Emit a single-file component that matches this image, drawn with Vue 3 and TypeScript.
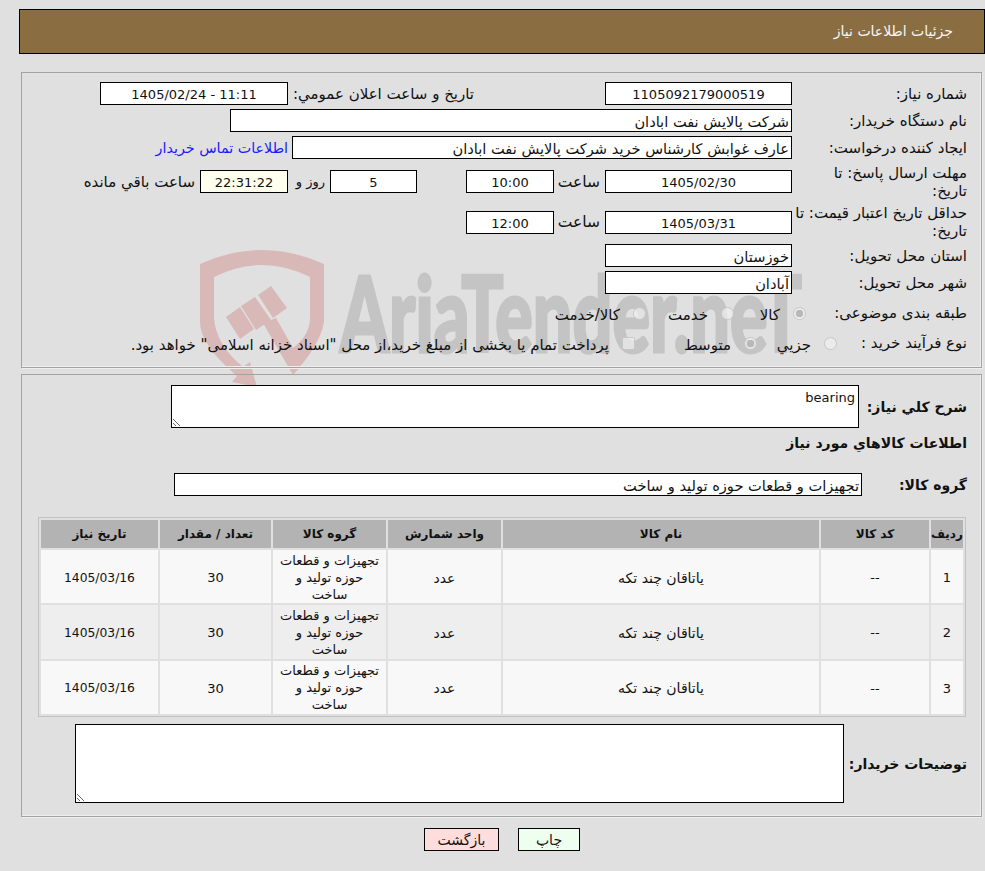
<script setup lang="ts">
interface Item {
  id: number
  code: string
  name: string
  unit: string
  group: string
  qty: number
  date: string
}

const items: Item[] = [1, 2, 3].map((id) => ({
  id,
  code: '--',
  name: 'یاتاقان چند تکه',
  unit: 'عدد',
  group: 'تجهیزات و قطعات حوزه تولید و ساخت',
  qty: 30,
  date: '1405/03/16',
}))
</script>

<template>
  <div class="page" dir="rtl">
    <!-- watermark -->
    <svg class="watermark" width="985" height="871" viewBox="0 0 985 871">
      <g fill="#d9b8b8">
        <path d="M200 264 Q262 236 324 264 L324 322 Q320 345 293 375 L293 348 Q310 335 310 318 L310 277 Q262 253 214 277 L214 318 Q216 345 243 367 L250 362 L257 387 L232 382 L237 376 Q200 345 200 322 Z" />
        <path d="M226 317 L240 307 L254 329 L240 339 Z" />
        <path d="M241 306 L255 297 L271 320 L256 330 Z" />
        <path d="M258 295 L271 286 L287 308 L273 318 Z" />
        <path d="M263 323 L276 318 L293 348 L293 375 Z" />
      </g>
      <text class="wm-text" x="340" y="352" textLength="462" lengthAdjust="spacingAndGlyphs">AriaTender.neT</text>
    </svg>

    <div class="content">
      <header class="title-bar">جزئیات اطلاعات نیاز</header>

      <section class="panel panel-top">
        <div class="row">
          <span class="label">شماره نیاز:</span>
          <div class="field w-187 center">1105092179000519</div>
          <span class="label-announce">تاريخ و ساعت اعلان عمومي:</span>
          <div class="field w-188 center">11:11 - 1405/02/24</div>
        </div>
        <div class="row">
          <span class="label">نام دستگاه خریدار:</span>
          <div class="field fa w-562">شرکت پالایش نفت ابادان</div>
        </div>
        <div class="row">
          <span class="label">ایجاد کننده درخواست:</span>
          <div class="field fa w-500">عارف غوابش کارشناس خرید شرکت پالایش نفت ابادان</div>
          <a class="contact" href="#">اطلاعات تماس خریدار</a>
        </div>
        <div class="row row-tall">
          <span class="label">مهلت ارسال پاسخ: تا<br />تاریخ:</span>
          <div class="field w-187 center">1405/02/30</div>
          <span class="hour">ساعت</span>
          <div class="field w-88 center">10:00</div>
          <div class="field w-87 center days">5</div>
          <span class="day-label">روز و</span>
          <div class="field w-88 center timer">22:31:22</div>
          <span class="remain">ساعت باقي مانده</span>
        </div>
        <div class="row row-tall">
          <span class="label">حداقل تاریخ اعتبار قیمت: تا<br />تاریخ:</span>
          <div class="field w-187 center">1405/03/31</div>
          <span class="hour">ساعت</span>
          <div class="field w-88 center">12:00</div>
        </div>
        <div class="row">
          <span class="label">استان محل تحویل:</span>
          <div class="field fa w-187">خوزستان</div>
        </div>
        <div class="row">
          <span class="label">شهر محل تحویل:</span>
          <div class="field fa w-187">آبادان</div>
        </div>
        <div class="row row-category">
          <span class="opt-label cat-label">طبقه بندی موضوعی:</span>
          <label class="option cat-1"><input type="radio" name="cat" checked disabled />کالا</label>
          <label class="option cat-2"><input type="radio" name="cat" disabled />خدمت</label>
          <label class="option"><input type="radio" name="cat" disabled />کالا/خدمت</label>
        </div>
        <div class="row row-process">
          <span class="opt-label proc-label">نوع فرآیند خرید :</span>
          <label class="option proc-1"><input type="radio" name="proc" disabled />جزيي</label>
          <label class="option proc-2"><input type="radio" name="proc" checked disabled />متوسط</label>
          <label class="option"><input class="check" type="checkbox" disabled />پرداخت تمام یا بخشی از مبلغ خرید،از محل "اسناد خزانه اسلامی" خواهد بود.</label>
        </div>
      </section>

      <section class="panel panel-bottom">
        <div class="desc-row">
          <span class="strong desc-label">شرح کلي نياز:</span>
          <textarea class="area area-desc" readonly>bearing</textarea>
        </div>
        <h3 class="strong goods-title">اطلاعات کالاهاي مورد نياز</h3>
        <div class="group-row">
          <span class="strong group-label">گروه کالا:</span>
          <div class="field fa w-688">تجهیزات و قطعات حوزه تولید و ساخت</div>
        </div>

        <table class="goods">
          <colgroup>
            <col class="c-id" />
            <col class="c-code" />
            <col class="c-name" />
            <col class="c-unit" />
            <col class="c-group" />
            <col class="c-qty" />
            <col class="c-date" />
          </colgroup>
          <thead>
            <tr>
              <th>ردیف</th>
              <th>کد کالا</th>
              <th>نام کالا</th>
              <th>واحد شمارش</th>
              <th>گروه کالا</th>
              <th>تعداد / مقدار</th>
              <th>تاریخ نیاز</th>
            </tr>
          </thead>
          <tbody>
            <tr v-for="item in items" :key="item.id">
              <td>{{ item.id }}</td>
              <td>{{ item.code }}</td>
              <td class="fa-cell">{{ item.name }}</td>
              <td class="fa-cell">{{ item.unit }}</td>
              <td class="group-cell">{{ item.group }}</td>
              <td>{{ item.qty }}</td>
              <td class="date-cell">{{ item.date }}</td>
            </tr>
          </tbody>
        </table>

        <div class="notes-row">
          <span class="strong notes-label">توضیحات خریدار:</span>
          <textarea class="area area-notes" readonly></textarea>
        </div>
      </section>

      <div class="actions">
        <button class="btn btn-print" type="button">چاپ</button>
        <button class="btn btn-back" type="button">بازگشت</button>
      </div>
    </div>
  </div>
</template>

<style>
html,
body {
  margin: 0;
  background: #e0e0e0;
}
</style>

<style scoped>
.page {
  position: relative;
  width: 985px;
  height: 871px;
  overflow: hidden;
  background: #e0e0e0;
  color: #111;
  font-family: "DejaVu Sans", Tahoma, sans-serif;
  font-size: 13px;
}

.watermark {
  position: absolute;
  left: 0;
  top: 0;
  direction: ltr;
  pointer-events: none;
}

.wm-text {
  direction: ltr;
  fill: #c4c4c4;
  stroke: #c4c4c4;
  stroke-width: 3px;
  font-family: "Lato", "DejaVu Sans", sans-serif;
  font-size: 104px;
  font-weight: 900;
}

.content {
  position: relative;
  padding-top: 9px;
}

.title-bar {
  box-sizing: border-box;
  width: 966px;
  height: 45px;
  padding-right: 31px;
  line-height: 43px;
  border: 1px solid #000;
  background: #8b6d42;
  color: #f6f6f6;
  font-size: 14px;
}

.panel {
  box-sizing: border-box;
  width: 961px;
  margin-right: 3px;
  border: 1px solid #a2a2a2;
  box-shadow: inset -1px -1px 0 #eee, 1px 1px 0 #eee;
}

.panel-top {
  height: 296px;
  margin-top: 18px;
  padding: 7px 14px 0 0;
}

.panel-bottom {
  height: 443px;
  margin-top: 6px;
  padding: 10px 14px 0 0;
}

.row {
  display: flex;
  align-items: center;
  height: 27px;
}

.row-tall {
  height: 41px;
}

.row-tall + .row-tall {
  height: 40px;
}

.row-category {
  height: 34px;
}

.row-process {
  height: 26px;
}

.label {
  flex: none;
  box-sizing: border-box;
  width: 175px;
  padding-left: 4px;
  font-size: 15px;
  line-height: 18px;
  white-space: nowrap;
}

.field {
  flex: none;
  box-sizing: border-box;
  height: 23px;
  padding: 0 2px;
  line-height: 23px;
  border: 1px solid #000;
  background: #fff;
  white-space: nowrap;
  overflow: hidden;
}

.field.fa {
  font-size: 14.6px;
}

.center {
  text-align: center;
}

.w-87 { width: 87px; }
.w-88 { width: 88px; }
.w-187 { width: 187px; }
.w-188 { width: 188px; }
.w-500 { width: 500px; }
.w-562 { width: 562px; }
.w-688 { width: 688px; }

.label-announce {
  flex: none;
  width: 186px;
  margin-right: 131px;
  font-size: 15px;
  white-space: nowrap;
}

.contact {
  margin-right: 4px;
  color: #1a1aff;
  font-size: 14.3px;
  text-decoration: none;
  white-space: nowrap;
}

.hour {
  box-sizing: border-box;
  width: 51px;
  padding-right: 5px;
  font-size: 15.5px;
}

.days {
  margin-right: 49px;
}

.timer {
  background: #ffffee;
}

.day-label {
  box-sizing: border-box;
  width: 42px;
  padding-right: 5px;
}

.remain {
  margin-right: 5px;
  font-size: 15px;
  white-space: nowrap;
}

.opt-label {
  flex: none;
  box-sizing: border-box;
  font-size: 15px;
  white-space: nowrap;
}

.cat-label { width: 161px; }
.proc-label { width: 130px; }

.option {
  display: flex;
  flex: none;
  align-items: center;
  gap: 13px;
  padding-top: 4px;
  font-size: 15px;
  white-space: nowrap;
}

.cat-1 { width: 72px; }
.cat-2 { width: 88px; }
.proc-1 { width: 80px; }
.proc-2 { width: 122px; }

.option input {
  appearance: none;
  box-sizing: border-box;
  width: 13px;
  height: 13px;
  margin: -4px 0 0;
  border: 1px solid rgba(190, 190, 190, 0.75);
  border-radius: 50%;
  background: rgba(240, 240, 240, 0.7);
}

.option input:checked {
  background: radial-gradient(circle, #b8b8b8 0 3.5px, rgba(240, 240, 240, 0.7) 4px);
}

.option input.check {
  border-radius: 2px;
}

.strong {
  font-weight: 700;
  font-size: 14px;
}

.desc-row,
.group-row,
.notes-row {
  display: flex;
  align-items: center;
}

.desc-label {
  width: 108px;
  flex: none;
}

.area {
  flex: none;
  box-sizing: border-box;
  margin: 0;
  padding: 4px 3px 0;
  border: 1px solid #000;
  border-radius: 0;
  outline: none;
  background: #fff;
  color: #111;
  font-family: inherit;
  font-size: 13px;
}

.area-desc {
  width: 688px;
  height: 43px;
}

.goods-title {
  height: 20px;
  margin: 5px 0 0;
  line-height: 20px;
}

.group-row {
  margin-top: 20px;
}

.group-label {
  width: 105px;
  flex: none;
}

.goods {
  box-sizing: border-box;
  width: 928px;
  height: 200px;
  margin: 21px 1px 0 0;
  table-layout: fixed;
  border: 1px solid #c2c2c2;
  border-spacing: 2px;
  border-collapse: separate;
}

.c-id { width: 32px; }
.c-code { width: 108px; }
.c-name { width: 316px; }
.c-unit { width: 113px; }
.c-group { width: 113px; }
.c-qty { width: 111px; }
.c-date { width: 117px; }

.goods th {
  height: 28px;
  padding: 0;
  background: #b3b3b3;
  font-size: 12px;
  font-weight: 700;
  white-space: nowrap;
}

.goods td {
  box-sizing: border-box;
  height: 53px;
  padding: 2px 0 0;
  text-align: center;
  background: #f8f8f8;
}

.goods td.fa-cell {
  font-size: 14px;
}

.goods td.date-cell {
  font-size: 12.3px;
}

.goods tbody tr:nth-child(2) td {
  background: #eeeeee;
}

.goods td.group-cell {
  padding: 1px 6px 0;
  line-height: 17px;
}

.notes-row {
  margin-top: 7px;
}

.notes-label {
  width: 123px;
  flex: none;
}

.area-notes {
  width: 769px;
  height: 79px;
}

.actions {
  display: flex;
  gap: 19px;
  margin: 11px 405px 0 0;
}

.btn {
  box-sizing: border-box;
  height: 23px;
  padding: 0;
  border: 1px solid #000;
  color: #111;
  font-family: inherit;
  font-size: 14px;
}

.btn-print {
  flex: none;
  width: 62px;
  background: #efffef;
}

.btn-back {
  flex: none;
  width: 75px;
  background: #ffdddd;
}
</style>
